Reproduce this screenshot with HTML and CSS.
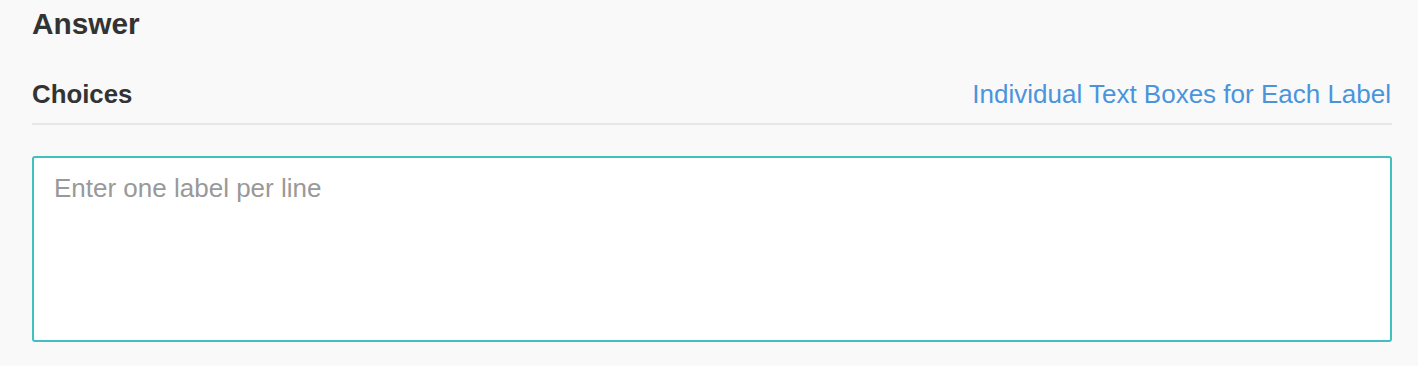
FILE: index.html
```html
<!DOCTYPE html>
<html lang="en">
<head>
<meta charset="utf-8">
<title>Answer</title>
<link rel="stylesheet" href="styles.css">
</head>
<body>
<div class="panel">
  <h2 class="title">Answer</h2>
  <div class="choices-head">
    <h3 class="subtitle">Choices</h3>
    <a class="toggle" href="#">Individual Text Boxes for Each Label</a>
  </div>
  <div class="labels-box"><span class="placeholder">Enter one label per line</span></div>
</div>
</body>
</html>
```

FILE: styles.css
```css
html, body {
  margin: 0;
  padding: 0;
  background: #f9f9f9;
}
body {
  font-family: "Liberation Sans", Arial, Helvetica, sans-serif;
  color: #333333;
  width: 1418px;
  height: 366px;
  overflow: hidden;
}
.panel {
  padding: 0 26px 0 32px;
}
.title {
  margin: 6px 0 0 0;
  font-size: 29.8px;
  line-height: 35px;
  font-weight: 700;
  color: #333333;
}
.choices-head {
  margin-top: 38px;
  display: flex;
  justify-content: space-between;
  align-items: baseline;
  padding-bottom: 14px;
  border-bottom: 2px solid #e6e6e6;
}
.subtitle {
  margin: 0;
  font-size: 25.8px;
  line-height: 30px;
  font-weight: 700;
  color: #333333;
}
.toggle {
  font-size: 26px;
  line-height: 30px;
  color: #4a94dc;
  text-decoration: none;
  margin-right: 1px;
}
.labels-box {
  margin-top: 31px;
  border: 2px solid #40c1bd;
  border-radius: 3px;
  background: #ffffff;
  padding: 15px 20px;
  box-sizing: border-box;
  height: 186px;
}
.placeholder {
  display: block;
  font-size: 26px;
  line-height: 30px;
  color: #999999;
}
```
